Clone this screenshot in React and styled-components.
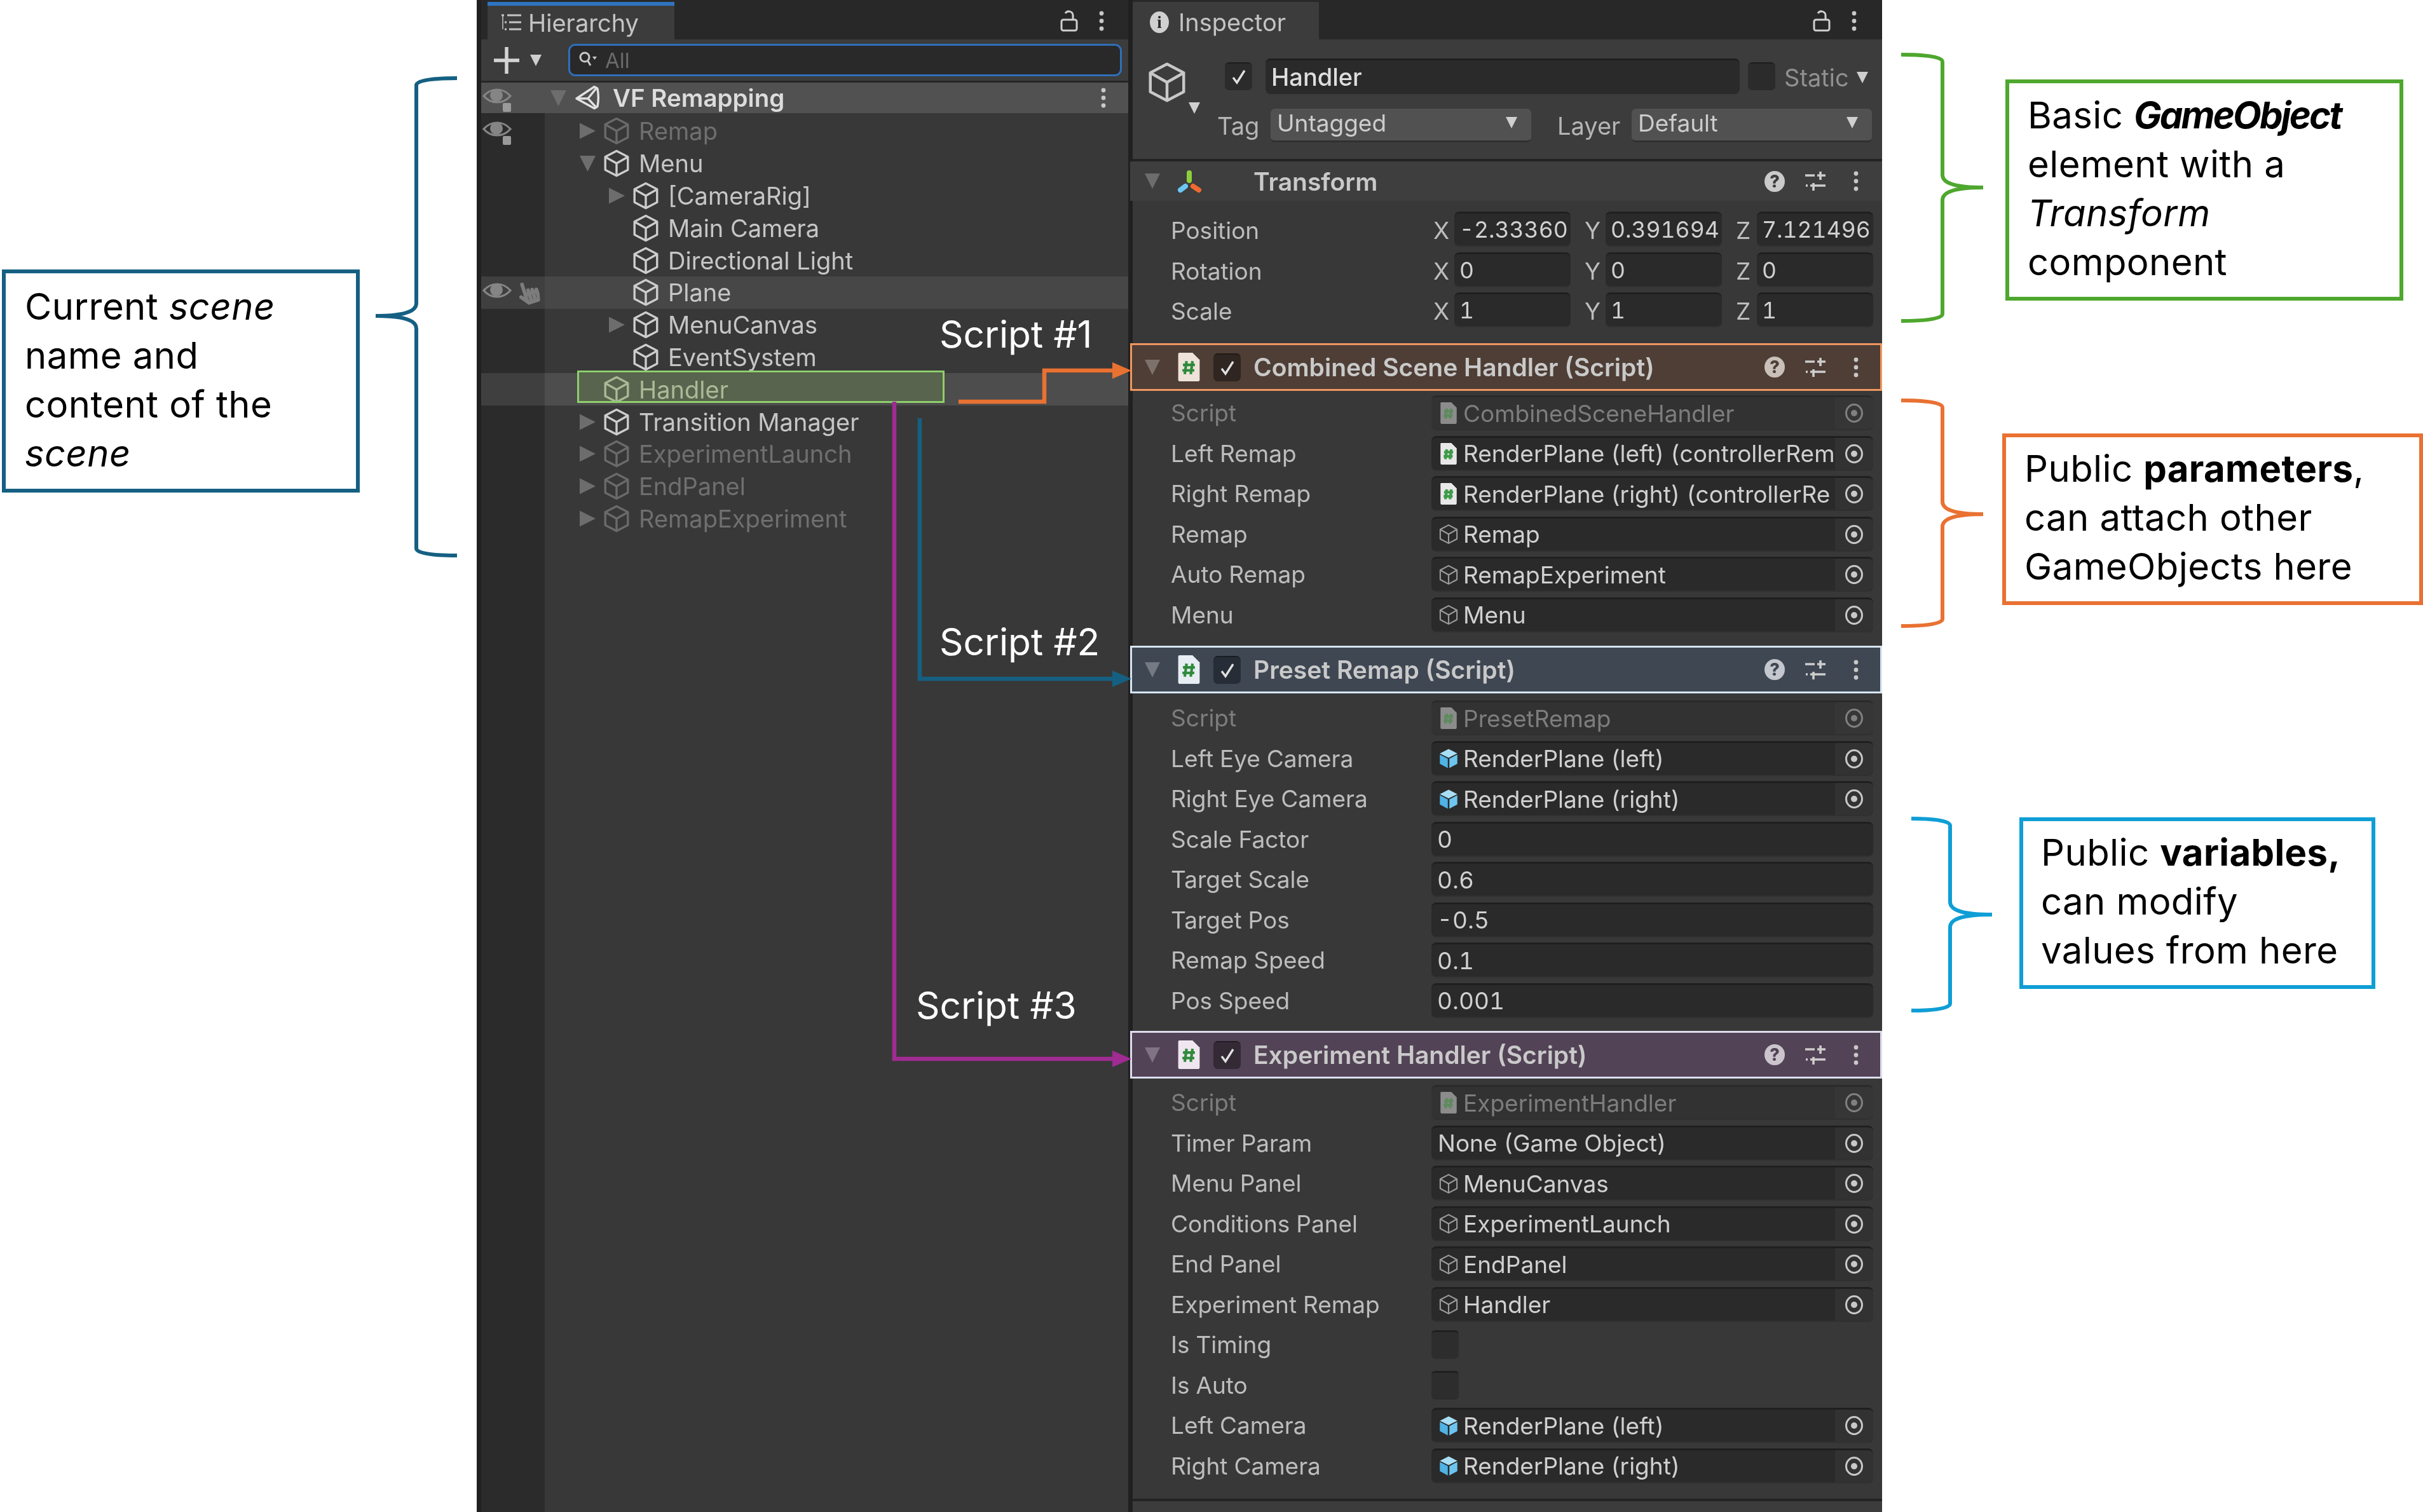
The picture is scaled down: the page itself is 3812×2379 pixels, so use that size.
import React from "react";
import styled, { createGlobalStyle } from "styled-components";
import { FaHandPointer } from "react-icons/fa";

const Global = createGlobalStyle`
  html, body { margin: 0; padding: 0; background: #fff; }
  * { box-sizing: border-box; }
  body { font-family: Inter, "Liberation Sans", sans-serif; }
`;

const Stage = styled.div`
  position: relative;
  width: 3812px;
  height: 2379px;
  overflow: hidden;
  background: #fff;
  display: flex;
  padding-left: 750px;
`;

/* ---------- Icons ---------- */
const Svg = styled.svg`
  display: block;
  flex: none;
`;

const Cube = ({ w = 42, h = 44, color = "#c8c8c8", sw = 2 }) => (
  <Svg width={w} height={h} viewBox="0 0 24 26" fill="none" stroke={color} strokeWidth={sw} strokeLinejoin="round">
    <path d="M12 1.5 22.5 7v12L12 24.5 1.5 19V7z" />
    <path d="M1.8 7.2 12 13l10.2-5.8M12 13v11.2" />
  </Svg>
);

const BlueCube = () => (
  <Svg width={30} height={33} viewBox="0 0 24 26">
    <path d="M12 1 23 6.5 12 12 1 6.5z" fill="#a8dff7" />
    <path d="M1 8 11 13.2V25L1 19.5z" fill="#4fb3e6" />
    <path d="M23 8 13 13.2V25l10-5.5z" fill="#6cc5ef" />
  </Svg>
);

const ScriptDoc = ({ w = 39, h = 45, paper = "#efe6de", mark = "#2f8a3c", sw = 2.2 }) => (
  <Svg width={w} height={h} viewBox="0 0 20 24">
    <path d="M2 0h11l6 6v16.500a1.500 1.500 0 0 1-1.500 1.500h-15A1.500 1.500 0 0 1 1 22.500V1a1 1 0 0 1 1-1z" fill={paper} />
    <path d="M8 7 6.500 18M13 7l-1.500 11M5 10.200h10M4.500 14.800h10" stroke={mark} strokeWidth={sw} fill="none" />
  </Svg>
);

const Tri = ({ dir = "down", w = 25, h = 24, color = "#6d6d6d" }) => (
  <Svg width={w} height={h} viewBox="0 0 10 10">
    <path d={dir === "down" ? "M0 0h10L5 10z" : "M0 0v10l10-5z"} fill={color} />
  </Svg>
);

const Kebab = ({ color = "#c8c8c8" }) => (
  <Svg width={10} height={32} viewBox="0 0 10 32" fill={color}>
    <circle cx="5" cy="4" r="3.400" />
    <circle cx="5" cy="16" r="3.400" />
    <circle cx="5" cy="28" r="3.400" />
  </Svg>
);

const Lock = () => (
  <Svg width={28} height={34} viewBox="0 0 28 34" fill="none" stroke="#cfcfcf" strokeWidth="3">
    <rect x="2" y="15" width="24" height="17" rx="3" />
    <path d="M20 15V8a6.500 6.500 0 0 0-12-3" />
  </Svg>
);

const Sliders = () => (
  <Svg width={34} height={30} viewBox="0 0 34 30" fill="none" stroke="#cdcdcd" strokeWidth="3.600">
    <path d="M1 6h15M20 6h13M25 0v13" />
    <path d="M2 22h3M9 22h24M14 18v12" />
  </Svg>
);

const Target = ({ color = "#c8c8c8" }) => (
  <Svg width={30} height={32} viewBox="0 0 30 32" fill="none">
    <ellipse cx="15" cy="16" rx="12.500" ry="13.500" stroke={color} strokeWidth="3" />
    <circle cx="15" cy="16" r="5" fill={color} />
  </Svg>
);

const Eye = () => (
  <Svg width={46} height={24} viewBox="0 0 46 24" fill="none">
    <path d="M2 12C9 4 16 2 23 2s14 2 21 10c-7 8-14 10-21 10S9 20 2 12z" stroke="#858585" strokeWidth="3.200" />
    <circle cx="22" cy="11" r="10" fill="#858585" />
  </Svg>
);

const SmallLock = styled.span`
  position: absolute;
  right: 1px;
  bottom: -13px;
  width: 13px;
  height: 14px;
  border-radius: 2px;
  background: #9a9a9a;
`;

const UnityLogo = () => (
  <Svg width={38} height={40} viewBox="0 0 38 40" fill="none" stroke="#e2e2e2" strokeWidth="3.400" strokeLinejoin="round">
    <path d="M2 21 30 2.500c3 1.500 4.500 2 5 3 1.500 8 1.500 20 0 28-.5 1-2 1.500-5 3z" />
    <path d="M2 21h18l13-16M20 21l13 14" />
  </Svg>
);

const AxisIcon = () => (
  <Svg width={42} height={38} viewBox="0 0 42 38" fill="none" strokeLinecap="round">
    <path d="M21 6v12" stroke="#8ccf3a" strokeWidth="8" />
    <path d="M7 33l8-6" stroke="#6cc6f2" strokeWidth="8" />
    <path d="M27 27l9 6" stroke="#ee6a30" strokeWidth="8" />
  </Svg>
);

const ListIcon = () => (
  <Svg width={36} height={30} viewBox="0 0 36 30" fill="none" stroke="#c4c4c4" strokeWidth="3">
    <path d="M2 3h4M6 3h0M11 3h22M7 14h3M14 14h19M7 25h3M14 25h19" />
    <path d="M4 3v22" strokeWidth="1.500" />
  </Svg>
);

const SearchIcon = () => (
  <Svg width={30} height={32} viewBox="0 0 30 32" fill="none" stroke="#c8c8c8" strokeWidth="3">
    <circle cx="10" cy="11" r="7" />
    <path d="M15 17l4 7" />
    <path d="M22 10h7l-3.500 5z" fill="#c8c8c8" stroke="none" />
  </Svg>
);

const PlusIcon = () => (
  <Svg width={40} height={44} viewBox="0 0 40 44" fill="none" stroke="#d4d4d4" strokeWidth="5.500">
    <path d="M20 1v42M0 22h40" />
  </Svg>
);

/* ---------- Panels ---------- */
const Soft = styled.div`
  display: flex;
  filter: blur(0.7px);
`;

const HierarchyPanel = styled.section`
  width: 1032px;
  height: 2379px;
  display: flex;
  flex-direction: column;
  background: #202020;
  padding: 0 7px;
`;

const InspectorPanel = styled.section`
  width: 1179px;
  height: 2379px;
  display: flex;
  flex-direction: column;
  background: #383838;
`;

const TabBar = styled.header`
  height: 62px;
  flex: none;
  display: flex;
  align-items: stretch;
  padding-top: 3px;
  background: #282828;
  color: #c4c4c4;
  font-size: 38px;
`;

const Tab = styled.div`
  margin-left: ${(p) => p.$inset}px;
  width: ${(p) => p.$w}px;
  display: flex;
  align-items: center;
  gap: ${(p) => p.$gap}px;
  padding-left: ${(p) => p.$pad}px;
  padding-top: ${(p) => (p.$active ? 0 : 5)}px;
  background: #3c3c3c;
  border-top: ${(p) => (p.$active ? "6px solid #2f74c0" : "0")};
`;

const TabTools = styled.div`
  margin-left: auto;
  display: flex;
  align-items: center;
  gap: 32px;
  padding-right: ${(p) => p.$pad}px;
`;

const InfoDot = styled.span`
  width: 30px;
  height: 34px;
  border-radius: 50%;
  background: #d0d0d0;
  color: #2c2c2c;
  font: 800 27px/34px "Liberation Serif", serif;
  text-align: center;
`;

const Toolbar = styled.div`
  height: 65px;
  flex: none;
  display: flex;
  align-items: center;
  background: #3c3c3c;
  padding-left: 20px;
  padding-right: 10px;
`;

const ToolArrow = styled.span`
  margin-left: 15px;
  margin-right: 40px;
  display: block;
`;

const SearchBox = styled.div`
  flex: 1;
  height: 51px;
  border: 3px solid #2f6fba;
  border-radius: 11px;
  background: #292929;
  display: flex;
  align-items: center;
  gap: 12px;
  padding-left: 13px;
  color: #6b6b6b;
  font-size: 33px;
`;

const ToolbarEdge = styled.div`
  height: 3px;
  flex: none;
  background: #262626;
`;

const SceneRow = styled.div`
  height: 48px;
  flex: none;
  display: flex;
  align-items: center;
  background: #515151;
  color: #dcdcdc;
  font-size: 38.500px;
  font-weight: 600;
  padding-right: 34px;
`;

const EyeSlot = styled.span`
  width: 100px;
  padding-left: 2px;
  flex: none;
  display: flex;
  align-items: center;
`;

const EyeWrap = styled.span`
  position: relative;
  display: block;
  top: -3px;
`;

const Tree = styled.div`
  flex: 1;
  display: flex;
  flex-direction: column;
  background: #383838;
`;

const TreeGap = styled.div`
  flex: ${(p) => (p.$fill ? 1 : "none")};
  height: ${(p) => (p.$fill ? "auto" : "3px")};
  width: 100px;
  background: #2b2b2b;
`;

const TreeRow = styled.div`
  height: 50.8px;
  flex: none;
  display: flex;
  align-items: center;
  background: ${(p) => p.$bg || "transparent"};
  color: ${(p) => p.$color || "#c6c6c6"};
  font-size: 38px;
`;

const Gutter = styled.span`
  align-self: stretch;
  width: 100px;
  flex: none;
  display: flex;
  align-items: center;
  gap: 8px;
  padding-left: 2px;
  background: ${(p) => p.$bg || "#2b2b2b"};
`;

const TreeIndent = styled.span`
  width: ${(p) => p.$w}px;
  flex: none;
`;

const TreeArrow = styled.span`
  width: 37px;
  flex: none;
  display: flex;
`;

const TreeName = styled.span`
  margin-left: 14px;
  white-space: nowrap;
`;

/* ---------- Inspector ---------- */
const ObjectHeader = styled.div`
  height: 188px;
  flex: none;
  display: flex;
  background: #3c3c3c;
`;

const BigIconSlot = styled.div`
  position: relative;
  width: 145px;
  flex: none;
  padding: 35px 0 0 23px;
`;

const IconCaret = styled.span`
  position: absolute;
  left: 86px;
  top: 99px;
`;

const ObjectFields = styled.div`
  flex: 1;
  display: flex;
  flex-direction: column;
`;

const NameLine = styled.div`
  margin-top: 30px;
  height: 56px;
  display: flex;
  align-items: center;
`;

const CheckBox = styled.span`
  width: 43px;
  height: 44px;
  flex: none;
  display: flex;
  align-items: center;
  justify-content: center;
  border-radius: 7px;
  background: ${(p) => p.$bg || "#2b2b2b"};
  border-top: 2px solid rgba(0, 0, 0, 0.35);
`;

const Check = ({ color = "#e0e0e0" }) => (
  <Svg width={26} height={26} viewBox="0 0 26 26" fill="none" stroke={color} strokeWidth="3.400">
    <path d="M4 14l6 8L22 3" />
  </Svg>
);

const NameField = styled.div`
  margin-left: 21px;
  margin-right: 13px;
  width: 746px;
  height: 56px;
  border-radius: 8px;
  background: #2a2a2a;
  border-top: 3px solid #1f1f1f;
  color: #dedede;
  font-size: 38px;
  font-weight: 500;
  padding-left: 9px;
  line-height: 53px;
`;

const StaticLabel = styled.span`
  margin-left: 14px;
  color: #909090;
  font-size: 38px;
  display: flex;
  align-items: center;
  gap: 10px;
  padding-top: 3px;
`;

const TagLine = styled.div`
  margin-top: 23px;
  height: 53px;
  display: flex;
  align-items: center;
  color: #b4b4b4;
  font-size: 38px;
`;

const TagLabel = styled.span`
  margin-left: ${(p) => p.$ml}px;
  width: ${(p) => p.$w}px;
  flex: none;
`;

const Dropdown = styled.div`
  width: ${(p) => p.$w}px;
  height: 53px;
  flex: none;
  display: flex;
  align-items: center;
  justify-content: space-between;
  padding: 0 20px 6px 10px;
  background: #515151;
  border-radius: 7px;
  border-bottom: 3px solid #303030;
  color: #cccccc;
  font-size: 37px;
`;

const Rule = styled.div`
  height: 4px;
  flex: none;
  background: #232323;
`;

const CompHeader = styled.div`
  height: ${(p) => p.$h}px;
  flex: none;
  margin-left: -4px;
  display: flex;
  align-items: center;
  padding-left: 18px;
  padding-right: 6px;
  background: ${(p) => p.$bg};
  border: 3px solid ${(p) => p.$edge};
  color: ${(p) => p.$ink || "#c9c9c9"};
  font-size: 39px;
  font-weight: 600;
  position: relative;
`;

const CompIcon = styled.span`
  margin-left: 24px;
  margin-right: 19px;
  width: 39px;
  flex: none;
  display: flex;
  justify-content: center;
`;

const CheckSlot = styled.span`
  width: 43px;
  margin-right: 20px;
  flex: none;
  display: flex;
`;

const HeaderTools = styled.span`
  margin-left: auto;
  display: flex;
`;

const ToolSlot = styled.span`
  width: 64px;
  display: flex;
  justify-content: center;
  align-items: center;
`;

const HelpDot = styled.span`
  width: 32px;
  height: 33px;
  border-radius: 50%;
  background: ${(p) => p.$bg || "#cacaca"};
  color: ${(p) => p.$ink || "#3c3c3c"};
  font: 800 27px/33px Inter, sans-serif;
  text-align: center;
`;

const CompBody = styled.div`
  flex: none;
  padding: ${(p) => p.$top}px 14px ${(p) => p.$bottom}px 60px;
`;

const PropRow = styled.div`
  height: 63.500px;
  display: grid;
  grid-template-columns: 410px 1fr;
  align-items: center;
  font-size: 37px;
  color: ${(p) => (p.$dim ? "#7d7d7d" : "#bdbdbd")};
  font-variant-numeric: tabular-nums;
`;

const VectorLabel = styled.span`
  padding-top: 4px;
`;

const Field = styled.div`
  height: 55px;
  display: flex;
  align-items: center;
  border-radius: 8px;
  background: ${(p) => (p.$dim ? "#323232" : "#2a2a2a")};
  border-top: 3px solid ${(p) => (p.$dim ? "#2a2a2a" : "#1f1f1f")};
  border-bottom: 2px solid #303030;
  color: ${(p) => (p.$dim ? "#7d7d7d" : "#d0d0d0")};
  overflow: hidden;
`;

const FieldIcon = styled.span`
  width: 50px;
  flex: none;
  padding-left: 12px;
  display: flex;
`;

const FieldText = styled.span`
  flex: 1;
  min-width: 0;
  padding-left: ${(p) => p.$pad || 0}px;
  white-space: nowrap;
  overflow: hidden;
`;

const PickButton = styled.span`
  width: 60px;
  flex: none;
  align-self: stretch;
  display: flex;
  align-items: center;
  justify-content: center;
  background: ${(p) => (p.$dim ? "#363636" : "#323232")};
`;

const VectorGroup = styled.div`
  display: flex;
  justify-content: space-between;
`;

const Axis = styled.div`
  display: flex;
  align-items: center;
  width: 219px;
`;

const AxisName = styled.span`
  width: 36px;
  flex: none;
  padding: 4px 0 0 3px;
`;

const AxisField = styled.span`
  width: 183px;
  height: 55px;
  flex: none;
  border-radius: 8px;
  background: #2a2a2a;
  border-top: 3px solid #1f1f1f;
  border-bottom: 2px solid #303030;
  color: #d0d0d0;
  padding-left: 8px;
  line-height: 51px;
  overflow: hidden;
  white-space: nowrap;
  font-size: 35.500px;
`;

const EmptyBox = styled.span`
  width: 43px;
  height: 45px;
  border-radius: 6px;
  background: #2d2d2d;
  border-top: 3px solid #1f1f1f;
`;

const FootRule = styled.div`
  height: 4px;
  flex: none;
  background: #232323;
`;

const FootFill = styled.div`
  flex: 1;
  background: #3c3c3c;
`;

/* ---------- Annotations ---------- */
const Overlay = styled.svg`
  position: absolute;
  inset: 0;
  pointer-events: none;
`;

const HandlerBox = styled.div`
  position: absolute;
  left: 908px;
  top: 583px;
  width: 578px;
  height: 51px;
  border: 3px solid #8fce6e;
  background: rgba(112, 150, 78, 0.32);
`;

const Callout = styled.aside`
  position: absolute;
  left: ${(p) => p.$x}px;
  top: ${(p) => p.$y}px;
  width: ${(p) => p.$w}px;
  height: ${(p) => p.$h}px;
  border: 6px solid ${(p) => p.$color};
  background: #fff;
  padding: ${(p) => p.$padTop}px 0 0 ${(p) => p.$padLeft}px;
  color: #000;
  font-size: 58px;
  line-height: 77px;
  letter-spacing: 0.4px;
`;

const CalloutLine = styled.div`
  white-space: nowrap;
`;

const TightBold = styled.b`
  font-style: italic;
  letter-spacing: -2.800px;
`;

const ScriptTag = styled.div`
  position: absolute;
  left: ${(p) => p.$x}px;
  top: ${(p) => p.$y}px;
  color: #fff;
  font-size: 58.500px;
  line-height: 70px;
  white-space: nowrap;
`;

/* ---------- Data ---------- */
const treeRows = [
  { name: "Remap", depth: 0, arrow: "right", dim: true, eye: true },
  { name: "Menu", depth: 0, arrow: "down" },
  { name: "[CameraRig]", depth: 1, arrow: "right" },
  { name: "Main Camera", depth: 1 },
  { name: "Directional Light", depth: 1 },
  { name: "Plane", depth: 1, hover: true },
  { name: "MenuCanvas", depth: 1, arrow: "right" },
  { name: "EventSystem", depth: 1 },
  { name: "Handler", depth: 0, selected: true },
  { name: "Transition Manager", depth: 0, arrow: "right" },
  { name: "ExperimentLaunch", depth: 0, arrow: "right", dim: true },
  { name: "EndPanel", depth: 0, arrow: "right", dim: true },
  { name: "RemapExperiment", depth: 0, arrow: "right", dim: true },
];

const comboRows = [
  { label: "Script", text: "CombinedSceneHandler", icon: "script", dim: true },
  { label: "Left Remap", text: "RenderPlane (left) (controllerRem", icon: "script" },
  { label: "Right Remap", text: "RenderPlane (right) (controllerRe", icon: "script" },
  { label: "Remap", text: "Remap", icon: "cube" },
  { label: "Auto Remap", text: "RemapExperiment", icon: "cube" },
  { label: "Menu", text: "Menu", icon: "cube" },
];

const presetRows = [
  { label: "Script", text: "PresetRemap", icon: "script", dim: true },
  { label: "Left Eye Camera", text: "RenderPlane (left)", icon: "blue" },
  { label: "Right Eye Camera", text: "RenderPlane (right)", icon: "blue" },
  { label: "Scale Factor", value: "0" },
  { label: "Target Scale", value: "0.6" },
  { label: "Target Pos", value: "-0.5" },
  { label: "Remap Speed", value: "0.1" },
  { label: "Pos Speed", value: "0.001" },
];

const expRows = [
  { label: "Script", text: "ExperimentHandler", icon: "script", dim: true },
  { label: "Timer Param", text: "None (Game Object)" },
  { label: "Menu Panel", text: "MenuCanvas", icon: "cube" },
  { label: "Conditions Panel", text: "ExperimentLaunch", icon: "cube" },
  { label: "End Panel", text: "EndPanel", icon: "cube" },
  { label: "Experiment Remap", text: "Handler", icon: "cube" },
  { label: "Is Timing", box: true },
  { label: "Is Auto", box: true },
  { label: "Left Camera", text: "RenderPlane (left)", icon: "blue" },
  { label: "Right Camera", text: "RenderPlane (right)", icon: "blue" },
];

const vectors = [
  { label: "Position", v: ["-2.33360", "0.391694", "7.121496"] },
  { label: "Rotation", v: ["0", "0", "0"] },
  { label: "Scale", v: ["1", "1", "1"] },
];

/* ---------- Pieces ---------- */
const rowIcon = (icon, dim) => {
  if (icon === "script")
    return <ScriptDoc w={30} h={34} paper={dim ? "#8c8c8c" : "#e8e8e8"} mark={dim ? "#5f8a5f" : "#3f9a4a"} sw={3} />;
  if (icon === "cube") return <Cube w={30} h={35} color="#9a9a9a" sw={1.700} />;
  if (icon === "blue") return <BlueCube />;
  return null;
};

const Prop = ({ row }) => (
  <PropRow $dim={row.dim}>
    <span>{row.label}</span>
    {row.box ? (
      <EmptyBox />
    ) : row.value ? (
      <Field>
        <FieldText $pad={9}>{row.value}</FieldText>
      </Field>
    ) : (
      <Field $dim={row.dim}>
        {row.icon && <FieldIcon>{rowIcon(row.icon, row.dim)}</FieldIcon>}
        <FieldText $pad={row.icon ? 0 : 10}>{row.text}</FieldText>
        <PickButton $dim={row.dim}>
          <Target color={row.dim ? "#808080" : "#c8c8c8"} />
        </PickButton>
      </Field>
    )}
  </PropRow>
);

const ScriptComponent = ({ title, tone, rows, top, bottom, paper, box }) => (
  <>
    <CompHeader $h={75} $bg={tone.bg} $edge={tone.edge}>
      <Tri w={28} h={24} color={tone.tri} />
      <CompIcon>
        <ScriptDoc paper={paper} />
      </CompIcon>
      <CheckSlot>
        <CheckBox $bg={box}>
          <Check />
        </CheckBox>
      </CheckSlot>
      <span>{title}</span>
      <HeaderTools>
        <ToolSlot>
          <HelpDot $bg={tone.help} $ink={tone.bg}>?</HelpDot>
        </ToolSlot>
        <ToolSlot>
          <Sliders />
        </ToolSlot>
        <ToolSlot>
          <Kebab />
        </ToolSlot>
      </HeaderTools>
    </CompHeader>
    <CompBody $top={top} $bottom={bottom}>
      {rows.map((r) => (
        <Prop key={r.label} row={r} />
      ))}
    </CompBody>
  </>
);

const braces = [
  { c: "#156082", end: 719, spine: 655, tip: 591, top: 123, mid: 497, bot: 874 },
  { c: "#4EA72E", end: 2991, spine: 3056, tip: 3120, top: 86, mid: 295, bot: 505 },
  { c: "#E97132", end: 2991, spine: 3056, tip: 3120, top: 630, mid: 809, bot: 985 },
  { c: "#0F9ED5", end: 3007, spine: 3068, tip: 3134, top: 1288, mid: 1439, bot: 1590 },
];

const bracePath = ({ end, spine, tip, top, mid, bot }) => {
  const a = (end - spine) * 0.55;
  const b = (tip - spine) * 0.35;
  return [
    `M${end} ${top}`,
    `C${spine + a} ${top} ${spine} ${top + 2} ${spine} ${top + 11}`,
    `L${spine} ${mid - 20}`,
    `C${spine} ${mid - 6} ${spine + b} ${mid} ${tip} ${mid}`,
    `C${spine + b} ${mid} ${spine} ${mid + 6} ${spine} ${mid + 20}`,
    `L${spine} ${bot - 11}`,
    `C${spine} ${bot - 2} ${spine + a} ${bot} ${end} ${bot}`,
  ].join(" ");
};

const Leader = ({ d, color, y }) => (
  <>
    <path d={d} fill="none" stroke={color} strokeWidth="6.500" strokeLinejoin="miter" />
    <path d={`M1750 ${y - 13} 1780 ${y} 1750 ${y + 13}z`} fill={color} />
  </>
);

export default function App() {
  return (
    <Stage>
      <Global />
      <Soft>
        <HierarchyPanel>
          <TabBar>
            <Tab $inset={10} $w={294} $gap={8} $pad={20} $active>
              <ListIcon />
              <span>Hierarchy</span>
            </Tab>
            <TabTools $pad={37}>
              <Lock />
              <Kebab />
            </TabTools>
          </TabBar>
          <Toolbar>
            <PlusIcon />
            <ToolArrow>
              <Tri w={22} h={18} color="#cfcfcf" />
            </ToolArrow>
            <SearchBox>
              <SearchIcon />
              <span>All</span>
            </SearchBox>
          </Toolbar>
          <ToolbarEdge />
          <SceneRow>
            <EyeSlot>
              <EyeWrap>
                <Eye />
                <SmallLock />
              </EyeWrap>
            </EyeSlot>
            <TreeIndent $w={9} />
            <Tri w={25} h={25} />
            <TreeIndent $w={14} />
            <UnityLogo />
            <TreeIndent $w={21} />
            <span>VF Remapping</span>
            <HeaderTools>
              <Kebab />
            </HeaderTools>
          </SceneRow>
          <Tree>
            <TreeGap />
            {treeRows.map((r) => (
              <TreeRow
                key={r.name}
                $bg={r.hover ? "#474747" : r.selected ? "#4d4d4d" : undefined}
                $color={r.dim ? "#6f6f6f" : r.selected ? "#c4ccb8" : undefined}
              >
                <Gutter $bg={r.hover ? "#3f3f3f" : r.selected ? "#3f3f3f" : undefined}>
                  {(r.eye || r.hover) && (
                    <EyeWrap>
                      <Eye />
                      {r.eye && <SmallLock />}
                    </EyeWrap>
                  )}
                  {r.hover && <FaHandPointer size={37} color="#7c7c7c" style={{ transform: "rotate(-18deg)" }} />}
                </Gutter>
                <TreeIndent $w={r.depth * 46 + 55} />
                <TreeArrow>{r.arrow && <Tri dir={r.arrow} w={25} h={r.arrow === "right" ? 28 : 25} />}</TreeArrow>
                <Cube color={r.dim ? "#6a6a6a" : r.selected ? "#c4ccb8" : "#cdcdcd"} />
                <TreeName>{r.name}</TreeName>
              </TreeRow>
            ))}
            <TreeGap $fill />
          </Tree>
        </HierarchyPanel>

        <InspectorPanel>
          <TabBar>
            <Tab $inset={0} $w={293} $gap={15} $pad={27}>
              <InfoDot>i</InfoDot>
              <span>Inspector</span>
            </Tab>
            <TabTools $pad={39}>
              <Lock />
              <Kebab />
            </TabTools>
          </TabBar>
          <ObjectHeader>
            <BigIconSlot>
              <Cube w={62} h={65} color="#c8c8c8" sw={1.800} />
              <IconCaret>
                <Tri w={22} h={18} color="#cfcfcf" />
              </IconCaret>
            </BigIconSlot>
            <ObjectFields>
              <NameLine>
                <CheckBox>
                  <Check />
                </CheckBox>
                <NameField>Handler</NameField>
                <CheckBox />
                <StaticLabel>
                  Static
                  <Tri w={22} h={18} color="#cfcfcf" />
                </StaticLabel>
              </NameLine>
              <TagLine>
                <TagLabel $ml={-12} $w={84}>Tag</TagLabel>
                <Dropdown $w={410}>
                  <span>Untagged</span>
                  <Tri w={22} h={18} color="#cfcfcf" />
                </Dropdown>
                <TagLabel $ml={41} $w={117}>Layer</TagLabel>
                <Dropdown $w={378}>
                  <span>Default</span>
                  <Tri w={22} h={18} color="#cfcfcf" />
                </Dropdown>
              </TagLine>
            </ObjectFields>
          </ObjectHeader>
          <Rule />
          <CompHeader $h={62} $bg="#3e3e3e" $edge="transparent">
            <Tri w={28} h={24} />
            <CompIcon>
              <AxisIcon />
            </CompIcon>
            <CheckSlot />
            <span>Transform</span>
            <HeaderTools>
              <ToolSlot>
                <HelpDot>?</HelpDot>
              </ToolSlot>
              <ToolSlot>
                <Sliders />
              </ToolSlot>
              <ToolSlot>
                <Kebab />
              </ToolSlot>
            </HeaderTools>
          </CompHeader>
          <CompBody $top={13} $bottom={20.5}>
            {vectors.map((row) => (
              <PropRow key={row.label}>
                <VectorLabel>{row.label}</VectorLabel>
                <VectorGroup>
                  {["X", "Y", "Z"].map((a, i) => (
                    <Axis key={a}>
                      <AxisName>{a}</AxisName>
                      <AxisField>{row.v[i]}</AxisField>
                    </Axis>
                  ))}
                </VectorGroup>
              </PropRow>
            ))}
          </CompBody>
          <ScriptComponent
            title="Combined Scene Handler (Script)"
            tone={{ bg: "#4e3e36", edge: "#f0965f", tri: "#7d716b", help: "#c9c0ba" }}
            rows={comboRows}
            top={3}
            bottom={17}
            paper="#efe3d9"
            box="#2f2521"
          />
          <ScriptComponent
            title="Preset Remap (Script)"
            tone={{ bg: "#3f4753", edge: "#d6e6f2", tri: "#757a82", help: "#c4c8ce" }}
            rows={presetRows}
            top={7}
            bottom={16}
            paper="#e6edf3"
            box="#272d36"
          />
          <ScriptComponent
            title="Experiment Handler (Script)"
            tone={{ bg: "#534356", edge: "#dcdcec", tri: "#807484", help: "#cbc4cd" }}
            rows={expRows}
            top={6}
            bottom={20}
            paper="#efe6f0"
            box="#332a36"
          />
          <FootRule />
          <FootFill />
        </InspectorPanel>
      </Soft>

      <HandlerBox />

      <Overlay width="3812" height="2379" viewBox="0 0 3812 2379">
        {braces.map((b) => (
          <path key={b.c} d={bracePath(b)} fill="none" stroke={b.c} strokeWidth="6" />
        ))}
        <Leader d="M1508 632H1643V583H1760" color="#E97132" y={583} />
        <Leader d="M1447 658V1068H1760" color="#156082" y={1068} />
        <Leader d="M1407 632V1666H1760" color="#A02B93" y={1666} />
      </Overlay>

      <ScriptTag $x={1478} $y={491}>Script #1</ScriptTag>
      <ScriptTag $x={1478} $y={975}>Script #2</ScriptTag>
      <ScriptTag $x={1441} $y={1547}>Script #3</ScriptTag>

      <Callout $x={3} $y={424} $w={563} $h={351} $color="#156082" $padTop={14} $padLeft={30}>
        <CalloutLine>Current <em>scene</em></CalloutLine>
        <CalloutLine>name and</CalloutLine>
        <CalloutLine>content of the</CalloutLine>
        <CalloutLine><em>scene</em></CalloutLine>
      </Callout>
      <Callout $x={3155} $y={125} $w={626} $h={348} $color="#4EA72E" $padTop={12} $padLeft={29}>
        <CalloutLine>Basic <TightBold>GameObject</TightBold></CalloutLine>
        <CalloutLine>element with a</CalloutLine>
        <CalloutLine><em>Transform</em></CalloutLine>
        <CalloutLine>component</CalloutLine>
      </Callout>
      <Callout $x={3150} $y={682} $w={662} $h={270} $color="#E97132" $padTop={11} $padLeft={29}>
        <CalloutLine>Public <b>parameters</b>,</CalloutLine>
        <CalloutLine>can attach other</CalloutLine>
        <CalloutLine>GameObjects here</CalloutLine>
      </Callout>
      <Callout $x={3177} $y={1286} $w={560} $h={270} $color="#0F9ED5" $padTop={11} $padLeft={28}>
        <CalloutLine>Public <b>variables,</b></CalloutLine>
        <CalloutLine>can modify</CalloutLine>
        <CalloutLine>values from here</CalloutLine>
      </Callout>
    </Stage>
  );
}
